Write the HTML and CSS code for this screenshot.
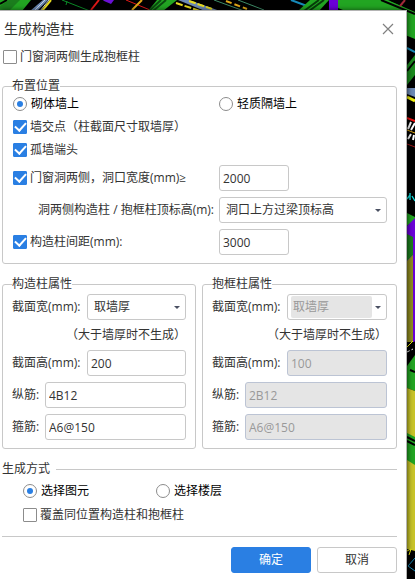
FILE: index.html
```html
<!DOCTYPE html>
<html lang="zh-CN">
<head>
<meta charset="utf-8">
<title>生成构造柱</title>
<link rel="stylesheet" href="styles.css">
</head>
<body>
<!-- model view behind the dialog -->
<svg class="scene" width="415" height="579" viewBox="0 0 415 579" aria-hidden="true">
  <rect width="415" height="579" fill="#000"/>
  <path d="M0 0H31L22 11H0Z" fill="#22a522"/>
  <path d="M0 6L9 0H20L9 11H0Z" fill="#1b7d1d"/>
  <path d="M7 0L0 4" stroke="#000" stroke-width="2"/>
  <path d="M43 0H48L37 11H30Z" fill="#6d8ab5"/>
  <path d="M45 0L34 11M49 0L40 11" stroke="#c4cede"/>
  <path d="M51 0L42 11" stroke="#e9dc20" stroke-width="2"/>
  <path d="M62 0L90 11M67 1L66 5" stroke="#0b8a27"/>
  <path d="M99 0L91 10" stroke="#e01818" stroke-width="2"/>
  <path d="M103 0H114L111 4L104 1Z" fill="#6a10d6"/>
  <path d="M126 0L150 10" stroke="#e01818"/>
  <path d="M142 0L132 10" stroke="#e0a818" stroke-width="2"/>
  <path d="M157 0H177L163 11H148Z" fill="#22a522"/>
  <path d="M166 0L153 11M161 0L149 11" stroke="#0b4b10" stroke-width="2"/>
  <path d="M178 0H189L220 11H205Z" fill="#6d8ab5"/>
  <path d="M176 3L200 11M189 1L212 9" stroke="#e9dc20" stroke-width="2" stroke-dasharray="7 2"/>
  <path d="M214 0L244 11M238 0L264 10" stroke="#3f8c68"/>
  <path d="M226 1L247 9" stroke="#e0a818" stroke-width="2" stroke-dasharray="6 3"/>
  <path d="M291 0L307 6" stroke="#1689b8" stroke-width="2"/>
  <path d="M310 0H329L319 11H298Z" fill="#22a522"/>
  <path d="M319 0L304 11M324 0L309 11" stroke="#073c0a" stroke-width="2"/>
  <path d="M329 0H338V11H329Z" fill="#6a00d8"/>
  <path d="M338 0H388L415 12V39L338 8Z" fill="#22a522"/>
  <path d="M381 0L415 14M391 0L415 10" stroke="#000" stroke-width="2"/>
  <path d="M405 0L400 6" stroke="#a22a3a" stroke-width="2"/>
  <path d="M407 48L415 52" stroke="#1689b8" stroke-width="2"/>
  <path d="M407 65L415 55V75L407 85Z" fill="#1b8a1e"/>
  <path d="M407 71L415 61" stroke="#000" stroke-width="2"/>
  <path d="M407 88H415V97L407 94Z" fill="#6d8ab5"/>
  <path d="M407 97L415 101" stroke="#f1f10c" stroke-width="3"/>
  <path d="M407 118L415 121" stroke="#f01010" stroke-width="2"/>
  <path d="M408 129L411 122M411 130L415 123M408 139L411 134M413 140L414 135" stroke="#fff" stroke-width="2"/>
  <path d="M407 130L415 133" stroke="#e0a818"/>
  <path d="M407 144L415 147" stroke="#a01818"/>
  <path d="M407 199L410 195M410 193V200M412 196L415 201" stroke="#10dede" stroke-width="1.4"/>
  <path d="M407 213L415 217V220L407 226Z" fill="#22a522"/>
  <path d="M407 226L415 218V342H407Z" fill="#6a00d8"/>
  <path d="M407 234L413 237V255L407 261Z" fill="#1b7d1d"/>
  <path d="M407 261L413 255V342H407Z" fill="#908c20"/>
  <path d="M407 349L415 341V370H407Z" fill="#000"/>
  <path d="M407 347L413 341" stroke="#f1f10c"/>
  <path d="M407 352L413 349" stroke="#fff" stroke-dasharray="3 2"/>
  <path d="M407 366L415 355V391L407 388Z" fill="#22a522"/>
  <path d="M410 370L415 372" stroke="#000" stroke-width="2"/>
  <path d="M407 388L415 391V551L407 549Z" fill="#c9c429"/>
  <path d="M407 433L415 437V465L407 460Z" fill="#22a522"/>
  <path d="M407 437L415 441M407 441L415 445" stroke="#000" stroke-width="2"/>
  <path d="M407 551L411 549L409 555" stroke="#f1f10c" fill="none"/>
  <path d="M415 558L408 566L415 571" stroke="#1689b8" fill="none"/>
</svg>

<form class="dialog">
  <div class="title-bar">
    <h1>生成构造柱</h1>
    <button type="button" class="close" aria-label="关闭">
      <svg width="12" height="12" viewBox="0 0 12 12"><path d="M1 1L11 11M11 1L1 11" stroke="#808080" stroke-width="1.2"/></svg>
    </button>
  </div>

  <label class="option top-option"><input type="checkbox"> 门窗洞两侧生成抱框柱</label>

  <fieldset class="position">
    <legend>布置位置</legend>
    <div class="pair radios">
      <label class="option"><input type="radio" name="wall" checked> 砌体墙上</label>
      <label class="option"><input type="radio" name="wall"> 轻质隔墙上</label>
    </div>
    <label class="option cross"><input type="checkbox" checked> 墙交点（柱截面尺寸取墙厚）</label>
    <label class="option end"><input type="checkbox" checked> 孤墙端头</label>
    <div class="rows">
      <div class="pair">
        <label class="option"><input type="checkbox" checked> 门窗洞两侧，洞口宽度(mm)≥</label>
        <input type="text" class="field short" value="2000" aria-label="洞口宽度">
      </div>
      <div class="pair">
        <label class="elevation" for="elevation">洞两侧构造柱 / 抱框柱顶标高(m):</label>
        <div class="select">
          <select id="elevation"><option>洞口上方过梁顶标高</option></select>
        </div>
      </div>
      <div class="pair">
        <label class="option"><input type="checkbox" checked> 构造柱间距(mm):</label>
        <input type="text" class="field short" value="3000" aria-label="构造柱间距">
      </div>
    </div>
  </fieldset>

  <div class="props">
    <fieldset>
      <legend>构造柱属性</legend>
      <div class="line">
        <label for="width1">截面宽(mm):</label>
        <div class="select"><select id="width1"><option>取墙厚</option></select></div>
      </div>
      <p class="note">（大于墙厚时不生成）</p>
      <div class="line">
        <label for="height1">截面高(mm):</label>
        <input type="text" class="field" id="height1" value="200">
      </div>
      <div class="line bar">
        <label for="long1">纵筋:</label>
        <input type="text" class="field" id="long1" value="4B12">
      </div>
      <div class="line bar">
        <label for="hoop1">箍筋:</label>
        <input type="text" class="field" id="hoop1" value="A6@150">
      </div>
    </fieldset>
    <fieldset>
      <legend>抱框柱属性</legend>
      <div class="line">
        <label for="width2">截面宽(mm):</label>
        <div class="select"><select id="width2" disabled><option>取墙厚</option></select></div>
      </div>
      <p class="note">（大于墙厚时不生成）</p>
      <div class="line">
        <label for="height2">截面高(mm):</label>
        <input type="text" class="field" id="height2" value="100" disabled>
      </div>
      <div class="line bar">
        <label for="long2">纵筋:</label>
        <input type="text" class="field" id="long2" value="2B12" disabled>
      </div>
      <div class="line bar">
        <label for="hoop2">箍筋:</label>
        <input type="text" class="field" id="hoop2" value="A6@150" disabled>
      </div>
    </fieldset>
  </div>

  <h2>生成方式</h2>
  <div class="mode">
    <div class="radios">
      <label class="option"><input type="radio" name="mode" checked> 选择图元</label>
      <label class="option"><input type="radio" name="mode"> 选择楼层</label>
    </div>
    <label class="option"><input type="checkbox"> 覆盖同位置构造柱和抱框柱</label>
  </div>

  <div class="buttons">
    <button type="submit" class="btn primary">确定</button>
    <button type="button" class="btn">取消</button>
  </div>
</form>
</body>
</html>
```
FILE: styles.css
```css
* {
  box-sizing: border-box;
}
body {
  margin: 0;
  padding: 10px 8px 0 0;
  background: #000;
  overflow: hidden;
}
body,
input,
select,
button {
  font-family: "Open Sans", "Noto Sans CJK SC", sans-serif;
  font-size: 12px;
  line-height: 16px;
  color: #333;
}
.scene {
  position: absolute;
  top: 0;
  left: 0;
  z-index: -1;
}
.dialog {
  min-height: calc(100vh - 10px);
  padding: 0 9px 5px 2px;
  background: #fff;
  border-top: 1px solid #b4b4b4;
  border-right: 1px solid #b4b4b4;
  box-shadow: 1px 0 5px rgba(0, 0, 0, 0.6);
}

.title-bar {
  display: flex;
  align-items: center;
  justify-content: space-between;
  height: 36px;
  padding: 0 3px 0 2px;
}
h1 {
  margin: 0;
  font-size: 14px;
  line-height: 20px;
  font-weight: normal;
}
.close {
  display: flex;
  padding: 0;
  border: 0;
  background: none;
}

.option {
  display: flex;
  align-items: center;
  gap: 3px;
  height: 20px;
  white-space: nowrap;
}
.top-option {
  padding-left: 1px;
}
.radios .option {
  gap: 4px;
  color: #000;
}
input[type="checkbox"],
input[type="radio"] {
  appearance: none;
  display: grid;
  place-content: center;
  flex: none;
  width: 14px;
  height: 14px;
  margin: 0;
  border: 1px solid #8c8c8c;
  border-radius: 1px;
  background: #fff;
}
input[type="radio"] {
  border-radius: 50%;
}
input[type="radio"]:checked::after {
  content: "";
  width: 6px;
  height: 6px;
  border-radius: 50%;
  background: #2a7fe3;
}
input[type="checkbox"]:checked {
  border-color: #2a7fe3;
  background: #2a7fe3;
}
input[type="checkbox"]:checked::after {
  content: "";
  width: 5px;
  height: 9px;
  margin-bottom: 3px;
  border: solid #fff;
  border-width: 0 2px 2px 0;
  transform: rotate(42deg);
}

fieldset {
  min-width: 0;
  margin: 0;
  padding: 0 9px 8px;
  border: 1px solid #c8c8c8;
  border-radius: 3px;
}
legend {
  padding: 0;
}
.position {
  margin-top: 11px;
  padding-left: 10px;
}
.position legend {
  margin-left: -1px;
}
.pair {
  display: grid;
  grid-template-columns: 206px 1fr;
  align-items: center;
}
.cross {
  height: 26px;
}
.rows {
  display: grid;
  gap: 6px;
  margin-top: 5px;
}
.elevation {
  padding-right: 5px;
  text-align: right;
  white-space: nowrap;
}

.field {
  flex: 1;
  min-width: 0;
  width: 100%;
  height: 26px;
  padding: 0 3px;
  border: 1px solid #c8c8c8;
  border-radius: 3px;
  background: #fff;
}
.short {
  width: 70px;
}
.field:disabled {
  border-color: #bcc4d4;
  background: #e5e5e5;
  color: #999;
}
.select {
  position: relative;
  display: flex;
  flex: 1;
  min-width: 0;
  height: 26px;
  border: 1px solid #c8c8c8;
  border-radius: 3px;
  background: #fff;
}
.select::after {
  content: "";
  position: absolute;
  top: 11px;
  right: 5px;
  border: solid transparent;
  border-width: 3px 3px 0;
  border-top-color: #4a5062;
  pointer-events: none;
}
select {
  appearance: none;
  flex: 1;
  min-width: 0;
  padding: 0 14px 0 6px;
  border: 0;
  background: none;
}
select:disabled {
  margin: 1px 14px 1px 3px;
  padding: 0 2px;
  border-radius: 2px;
  background: #e5e5e5;
  color: #999;
  opacity: 1;
}

.props {
  display: grid;
  grid-template-columns: 194fr 195fr;
  gap: 6px;
  margin-top: 12px;
}
.line {
  display: flex;
  align-items: center;
  margin-top: 6px;
}
legend + .line {
  margin-top: 2px;
}
.line label {
  width: 75px;
  white-space: nowrap;
}
.bar label {
  width: 33px;
}
.note {
  margin: 6px 0;
  line-height: 18px;
  text-align: right;
  white-space: nowrap;
}

h2 {
  display: flex;
  align-items: center;
  gap: 6px;
  margin: 12px 0 0;
  font-size: 12px;
  line-height: 16px;
  font-weight: normal;
}
h2::after {
  content: "";
  flex: 1;
  border-top: 1px solid #c8c8c8;
}
.mode {
  display: grid;
  gap: 4px;
  padding: 4px 0 11px 21px;
  border-bottom: 1px solid #c8c8c8;
}
.mode .radios {
  display: grid;
  grid-template-columns: 133px 1fr;
}
.buttons {
  display: flex;
  justify-content: flex-end;
  gap: 6px;
  margin-top: 10px;
}
.btn {
  width: 80px;
  height: 26px;
  padding: 0;
  border: 1px solid #c8c8c8;
  border-radius: 3px;
  background: #fff;
}
.primary {
  border-color: #2a7fe3;
  background: #2a7fe3;
  color: #fff;
}
```
